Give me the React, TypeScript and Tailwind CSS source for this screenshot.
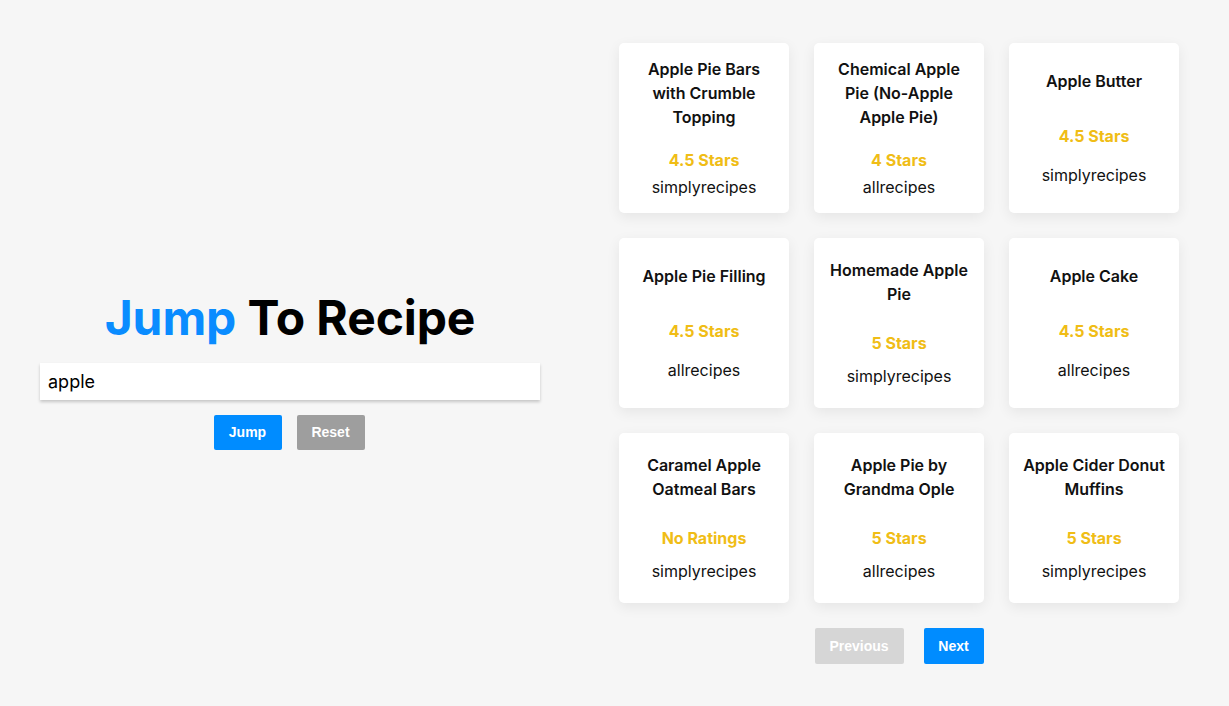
import React, { useState } from 'react';

type Recipe = { title: string; rating: string; source: string };

const recipes: Recipe[] = [
  { title: 'Apple Pie Bars with Crumble Topping', rating: '4.5 Stars', source: 'simplyrecipes' },
  { title: 'Chemical Apple Pie (No-Apple Apple Pie)', rating: '4 Stars', source: 'allrecipes' },
  { title: 'Apple Butter', rating: '4.5 Stars', source: 'simplyrecipes' },
  { title: 'Apple Pie Filling', rating: '4.5 Stars', source: 'allrecipes' },
  { title: 'Homemade Apple Pie', rating: '5 Stars', source: 'simplyrecipes' },
  { title: 'Apple Cake', rating: '4.5 Stars', source: 'allrecipes' },
  { title: 'Caramel Apple Oatmeal Bars', rating: 'No Ratings', source: 'simplyrecipes' },
  { title: 'Apple Pie by Grandma Ople', rating: '5 Stars', source: 'allrecipes' },
  { title: 'Apple Cider Donut Muffins', rating: '5 Stars', source: 'simplyrecipes' },
];

const RecipeCard = ({ recipe }: { recipe: Recipe }) => (
  <div className="w-[170px] h-[170px] bg-white rounded-[5px] shadow-[0_4px_14px_rgba(0,0,0,0.07)] p-[11px] flex flex-col justify-evenly text-center text-[16px] leading-6 text-[#111]">
    <h3 className="font-semibold">{recipe.title}</h3>
    <p className="font-bold text-[#f0bd16] mt-4">{recipe.rating}</p>
    <p className="font-normal">{recipe.source}</p>
  </div>
);

export default function App() {
  const [query, setQuery] = useState('apple');

  return (
    <div className="flex h-[706px] w-full bg-[#f6f6f6] font-['Inter',sans-serif] overflow-hidden">
      {/* search side */}
      <div className="w-[580px] flex flex-col items-center justify-center pt-[33px]">
        <h1 className="text-[48px] leading-[58px] font-bold text-black tracking-[-0.1px]">
          <span className="text-[#0a8cff]">Jump</span> To Recipe
        </h1>
        <input
          value={query}
          onChange={(e) => setQuery(e.target.value)}
          className="mt-4 w-[500px] h-[37px] bg-white px-2 text-[18px] text-black outline-none shadow-[0_2px_3px_rgba(0,0,0,0.2)]"
        />
        <div className="mt-[15px] -ml-[2px] flex gap-[15px] font-['Liberation_Sans',Arial,sans-serif] text-[14px] font-bold text-white">
          <button className="w-[68px] h-[35px] rounded-[2px] bg-[#008cff]">Jump</button>
          <button className="w-[68px] h-[35px] rounded-[2px] bg-[#9e9e9e]">Reset</button>
        </div>
      </div>

      {/* results side */}
      <div className="pl-[39px] pt-[43px] flex flex-col items-center self-start">
        <div className="grid grid-cols-3 gap-[25px]">
          {recipes.map((r) => (
            <RecipeCard key={r.title} recipe={r} />
          ))}
        </div>
        <div className="mt-[25px] flex gap-5 font-['Liberation_Sans',Arial,sans-serif] text-[14px] font-bold text-white">
          <button className="w-[89px] h-[36px] rounded-[2px] bg-[#d6d6d6]">Previous</button>
          <button className="w-[60px] h-[36px] rounded-[2px] bg-[#008cff]">Next</button>
        </div>
      </div>
    </div>
  );
}
